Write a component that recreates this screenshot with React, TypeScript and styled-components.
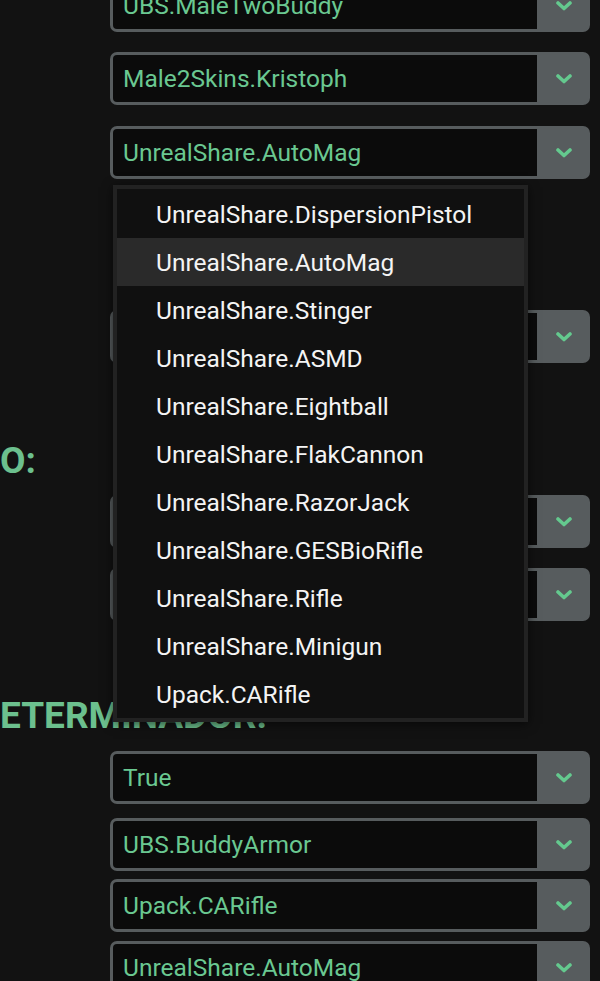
import React from "react";
import styled, { createGlobalStyle } from "styled-components";

const Global = createGlobalStyle`
  html, body {
    margin: 0;
    padding: 0;
    background: #121212;
    overflow: hidden;
  }
  body {
    font-family: Roboto, "Noto Sans", "Liberation Sans", sans-serif;
  }
`;

const Page = styled.div`
  position: relative;
  width: 600px;
  height: 981px;
  overflow: hidden;
  background: #121212;
`;

const Column = styled.div`
  display: flex;
  flex-direction: column;
  padding: 0 10px 0 0;
  margin-top: -21px;
`;

const Row = styled.div<{ $top: number; $indent?: boolean }>`
  position: relative;
  margin-top: ${(p) => p.$top}px;
  padding-left: ${(p) => (p.$indent === false ? 0 : 110)}px;
`;

const SectionLabel = styled.div<{ $height: number }>`
  height: ${(p) => p.$height}px;
  display: flex;
  align-items: center;
  font-family: Roboto, "Liberation Sans", sans-serif;
  font-weight: 700;
  font-size: 37px;
  color: #6cc08e;
  white-space: nowrap;
`;

const SelectBox = styled.div`
  box-sizing: border-box;
  height: 53px;
  width: 480px;
  display: flex;
  background: #575c5e;
  border-radius: 7px;
  padding: 3px 0 3px 3px;
`;

const Value = styled.div`
  flex: 1;
  background: #0b0b0b;
  border-radius: 4px 0 0 4px;
  display: flex;
  align-items: center;
  padding-left: 10px;
  font-size: 24.5px;
  color: #6ac891;
  white-space: nowrap;
  overflow: hidden;
`;

const Toggle = styled.div`
  width: 53px;
  display: flex;
  align-items: center;
  justify-content: center;
`;

const Menu = styled.div`
  position: absolute;
  z-index: 5;
  left: 113px;
  top: 59px;
  width: 415px;
  box-sizing: border-box;
  background: #101010;
  border: 4px solid #222222;
  padding-top: 1px;
  box-shadow: 0 2px 10px rgba(0, 0, 0, 0.6);
  display: flex;
  flex-direction: column;
`;

const MenuItem = styled.div<{ $active?: boolean }>`
  height: 48px;
  display: flex;
  align-items: center;
  padding-left: 39px;
  font-size: 24.5px;
  color: #f4f4f4;
  white-space: nowrap;
  background: ${(p) => (p.$active ? "#2a2a2a" : "transparent")};
`;

const Chevron = () => (
  <svg width="16" height="10" viewBox="0 0 16 10">
    <polyline
      points="2,2 8,7.5 14,2"
      fill="none"
      stroke="#64c98e"
      strokeWidth="3.6"
      strokeLinecap="round"
      strokeLinejoin="round"
    />
  </svg>
);

const Select = ({ value }: { value: string }) => (
  <SelectBox>
    <Value>{value}</Value>
    <Toggle>
      <Chevron />
    </Toggle>
  </SelectBox>
);

const weapons = [
  "UnrealShare.DispersionPistol",
  "UnrealShare.AutoMag",
  "UnrealShare.Stinger",
  "UnrealShare.ASMD",
  "UnrealShare.Eightball",
  "UnrealShare.FlakCannon",
  "UnrealShare.RazorJack",
  "UnrealShare.GESBioRifle",
  "UnrealShare.Rifle",
  "UnrealShare.Minigun",
  "Upack.CARifle",
];

export default function App() {
  return (
    <Page>
      <Global />
      <Column>
        <Row $top={0}>
          <Select value="UBS.MaleTwoBuddy" />
        </Row>
        <Row $top={20}>
          <Select value="Male2Skins.Kristoph" />
        </Row>
        <Row $top={21}>
          <Select value="UnrealShare.AutoMag" />
          <Menu>
            {weapons.map((w) => (
              <MenuItem key={w} $active={w === "UnrealShare.AutoMag"}>
                {w}
              </MenuItem>
            ))}
          </Menu>
        </Row>
        <Row $top={131}>
          <Select value="" />
        </Row>
        <Row $top={72} $indent={false}>
          <SectionLabel $height={50}>O:</SectionLabel>
        </Row>
        <Row $top={10}>
          <Select value="" />
        </Row>
        <Row $top={20}>
          <Select value="" />
        </Row>
        <Row $top={69} $indent={false}>
          <SectionLabel $height={50}>ETERMINADOR:</SectionLabel>
        </Row>
        <Row $top={11}>
          <Select value="True" />
        </Row>
        <Row $top={14}>
          <Select value="UBS.BuddyArmor" />
        </Row>
        <Row $top={8}>
          <Select value="Upack.CARifle" />
        </Row>
        <Row $top={9}>
          <Select value="UnrealShare.AutoMag" />
        </Row>
      </Column>
    </Page>
  );
}
